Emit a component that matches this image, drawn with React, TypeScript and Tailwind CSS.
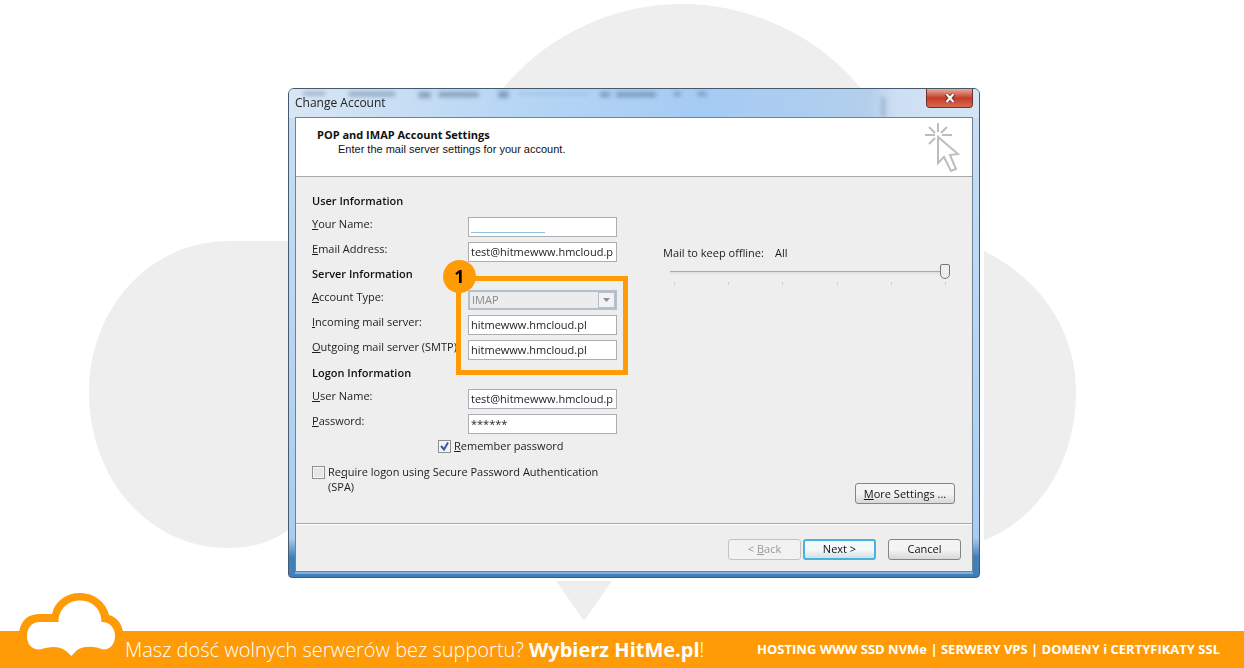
import React from 'react';

interface FieldRowProps {
    id: string;
    hotkey: string;
    label: string;
    children: React.ReactNode;
}

const inputStyles =
    'block h-5 w-full border border-[#abadb3] bg-white px-[2px] pb-[2px] text-[11px] font-medium text-[#1c1c1c] outline-none';

const buttonStyles =
    'h-[21px] rounded-[3px] border border-[#858585] bg-linear-to-b from-[#f4f4f4] from-50% to-[#d8d8d8] leading-[18px] text-[#111]';

const FieldRow: React.FC<FieldRowProps> = ({ id, hotkey, label, children }) => (
    <div className="flex h-[25px] items-end">
        <label htmlFor={id} className="w-[156px] shrink-0 self-start whitespace-nowrap leading-[24px]">
            <u>{hotkey}</u>
            {label}
        </label>
        <div className="relative w-[149px]">{children}</div>
    </div>
);

const SectionTitle: React.FC<{ children: React.ReactNode }> = ({ children }) => (
    <h2 className="h-[23px] font-semibold leading-[24px] text-[#111]">{children}</h2>
);

const BackgroundCloud = () => (
    <svg className="absolute inset-x-0 top-0 w-full" viewBox="0 0 1244 631" fill="#eeeeee" aria-hidden="true">
        <circle cx="682" cy="236" r="232" />
        <path d="M230 241 H500 V530 H288 C270 543 250 548 228 548 C150 548 89 480 89 392 C89 310 148 241 230 241 Z" />
        <path d="M900 230 C1005 236 1076 305 1076 392 C1076 460 1040 518 985 540 L900 530 Z" />
        <path d="M554 578 H614 L584 621 Z" />
    </svg>
);

// Blurred toolbar of the window behind the glass title bar
const GlassBlur = () => (
    <svg className="absolute inset-x-0 top-0 h-[29px] w-full rounded-t-[5px]" viewBox="0 0 692 29" preserveAspectRatio="none" aria-hidden="true">
        <defs>
            <filter id="glass" x="-20%" y="-60%" width="140%" height="220%">
                <feGaussianBlur stdDeviation="2" />
            </filter>
            <linearGradient id="tint">
                <stop offset="0" stopColor="#d9e6f3" />
                <stop offset="0.3" stopColor="#b9d7f5" />
                <stop offset="0.6" stopColor="#a5cbf3" />
                <stop offset="0.84" stopColor="#b3cfec" />
                <stop offset="0.88" stopColor="#cddff2" />
                <stop offset="1" stopColor="#d3e4f5" />
            </linearGradient>
        </defs>
        <rect width="692" height="29" fill="url(#tint)" />
        <g filter="url(#glass)" fill="#5d7896" opacity="0.6">
            <rect x="14" y="3" width="22" height="3" />
            <rect x="60" y="3" width="46" height="4" />
            <rect x="130" y="3" width="12" height="6" />
            <rect x="150" y="3" width="40" height="5" />
            <rect x="210" y="2" width="10" height="7" />
            <rect x="230" y="4" width="70" height="2" opacity="0.4" />
            <rect x="312" y="3" width="10" height="5" />
            <rect x="328" y="3" width="40" height="5" />
            <rect x="386" y="3" width="7" height="4" />
            <rect x="410" y="3" width="9" height="4" />
            <rect x="594" y="8" width="4" height="20" opacity="0.6" />
        </g>
    </svg>
);

const ClickIcon = () => (
    <svg width="36" height="52" viewBox="0 0 36 52" fill="none" stroke="#bdbdbd" strokeWidth="2" aria-hidden="true">
        <path d="M14 2 V11 M1 14 H11 M18 14 H28 M5 6 L11 12 M23 6 L17 12 M5 23 L11 17" />
        <path d="M14 16 V42 L20 36 L27 50 L32 48 L26 34 L34 33 Z" fill="#fff" />
    </svg>
);

const CloudLogo = () => (
    <svg className="absolute bottom-0 left-[19px]" width="105" height="76" viewBox="19 592 105 76" aria-hidden="true">
        <path
            fill="#ff9b06"
            d="M19 632 C21 620 28 614 40 614 H52 C55 601 66 593 80 593 C94 593 106 602 109 615 C117 617 122 624 123 632 Z"
        />
        <path
            fill="#fff"
            d="M40 622 H58.500 C58.500 609 68 600.500 80 600.500 C92 600.500 101.500 609 101.500 622 C110 622 115 628 115 636 C115 644 110 650 103 649.500 C96 646 82 645 76 651 L71.500 656 L66 651 C60 646 50 646 40 649.500 C32 650 27 644 27 636 C27 628 32 622 40 622 Z"
        />
    </svg>
);

const OfflineSlider = () => (
    <div className="w-[292px]">
        <div className="flex gap-[11px] leading-4">
            <label htmlFor="offline">Mail to keep offline:</label>
            <output htmlFor="offline">All</output>
        </div>
        <input
            id="offline"
            type="range"
            min={0}
            max={5}
            defaultValue={5}
            className="ml-[7px] mt-[3px] block h-4 w-[280px] appearance-none bg-transparent [&::-webkit-slider-runnable-track]:h-[3px] [&::-webkit-slider-runnable-track]:border-t [&::-webkit-slider-runnable-track]:border-[#a9a9a9] [&::-webkit-slider-runnable-track]:bg-[#e2e2e2] [&::-webkit-slider-thumb]:-mt-[8px] [&::-webkit-slider-thumb]:h-[15px] [&::-webkit-slider-thumb]:w-[10px] [&::-webkit-slider-thumb]:appearance-none [&::-webkit-slider-thumb]:rounded-t-[2px] [&::-webkit-slider-thumb]:rounded-b-[5px] [&::-webkit-slider-thumb]:border [&::-webkit-slider-thumb]:border-[#777] [&::-webkit-slider-thumb]:bg-[#eee]"
        />
        <div className="ml-[11px] mt-[2px] flex w-[272px] justify-between">
            {[0, 1, 2, 3, 4, 5].map((tick) => (
                <span key={tick} className="h-[3px] w-px bg-[#cccccc]" />
            ))}
        </div>
    </div>
);

const AccountForm = () => (
    <div className="flex flex-1 justify-between border-t border-[#a8a8a8] bg-[#eeeeee] pl-[16px] pr-[17px] pt-[12px]">
        <div className="w-[306px] shrink-0">
            <section>
                <SectionTitle>User Information</SectionTitle>
                <FieldRow id="name" hotkey="Y" label="our Name:">
                    <input id="name" className={inputStyles} />
                    <span className="absolute bottom-[4px] left-[3px] h-px w-[74px] bg-[#8fc3e3]" />
                </FieldRow>
                <FieldRow id="email" hotkey="E" label="mail Address:">
                    <input id="email" className={inputStyles} defaultValue="test@hitmewww.hmcloud.p" />
                </FieldRow>
            </section>

            <section className="relative">
                <SectionTitle>Server Information</SectionTitle>
                <FieldRow id="type" hotkey="A" label="ccount Type:">
                    <select
                        id="type"
                        disabled
                        className="block h-5 w-full appearance-none border-2 border-[#b5bfcc] bg-[#ececec] px-[2px] leading-4 text-[#8a8a8a] opacity-100"
                    >
                        <option>IMAP</option>
                    </select>
                    <span className="pointer-events-none absolute right-[2px] top-[2px] flex h-4 w-[17px] items-center justify-center border border-[#b5bfcc] bg-[#f3f3f3]">
                        <svg width="7" height="4" viewBox="0 0 7 4" fill="#8f8f8f" aria-hidden="true">
                            <path d="M0 0 H7 L3.500 4 Z" />
                        </svg>
                    </span>
                </FieldRow>
                <FieldRow id="incoming" hotkey="I" label="ncoming mail server:">
                    <input id="incoming" className={inputStyles} defaultValue="hitmewww.hmcloud.pl" />
                </FieldRow>
                <FieldRow id="outgoing" hotkey="O" label="utgoing mail server (SMTP)">
                    <input id="outgoing" className={inputStyles} defaultValue="hitmewww.hmcloud.pl" />
                </FieldRow>
                <div className="pointer-events-none absolute left-[144px] top-[14px] h-[99px] w-[172px] border-[5px] border-[#ff9b06]">
                    <span className="absolute -left-[18px] -top-[21px] flex size-[33px] items-center justify-center rounded-full bg-[#ff9b06] text-[18px] font-bold text-black">
                        1
                    </span>
                </div>
            </section>

            <section className="pt-px">
                <SectionTitle>Logon Information</SectionTitle>
                <FieldRow id="user" hotkey="U" label="ser Name:">
                    <input id="user" className={inputStyles} defaultValue="test@hitmewww.hmcloud.p" />
                </FieldRow>
                <FieldRow id="password" hotkey="P" label="assword:">
                    <input id="password" className={inputStyles} defaultValue="******" />
                </FieldRow>
            </section>

            <label className="flex h-[25px] items-center gap-[3px] pl-[126px]">
                <span className="relative flex size-[13px]">
                    <input type="checkbox" defaultChecked className="size-[13px] appearance-none border border-[#8e8f8f] bg-[#f2f4f8]" />
                    <svg className="pointer-events-none absolute inset-0" width="13" height="13" viewBox="0 0 13 13" fill="none" stroke="#3d56a6" strokeWidth="2" aria-hidden="true">
                        <path d="M3 6 L6 9.500 L10 2.500" />
                    </svg>
                </span>
                <span>
                    <u>R</u>emember password
                </span>
            </label>
            <label className="mt-[5px] flex gap-[3px] leading-[15px]">
                <input type="checkbox" className="mt-[2px] size-[13px] shrink-0 appearance-none border border-[#8e8f8f] bg-[#e6e6e6] shadow-[inset_0_0_0_1px_#f6f6f6]" />
                <span>
                    Re<u>q</u>uire logon using Secure Password Authentication (SPA)
                </span>
            </label>
        </div>

        <div className="flex flex-col items-end justify-between pb-[19px] pt-[56px]">
            <OfflineSlider />
            <button type="button" className={`${buttonStyles} w-[100px]`}>
                <u>M</u>ore Settings ...
            </button>
        </div>
    </div>
);

const AccountDialog = () => (
    <div
        role="dialog"
        aria-labelledby="dialog-title"
        className="relative flex min-h-[490px] w-full max-w-[692px] flex-col rounded-t-[6px] rounded-b-[4px] border border-[#46586b] bg-linear-to-b from-[#c9dff5] via-[#a9cdf0] via-92% to-[#3f7fba] to-96% px-[6px] pb-[5px] text-[11px] font-medium text-[#1c1c1c] shadow-[3px_2px_0_1px_#ffffff]"
    >
        <GlassBlur />
        <div className="relative flex h-[28px] items-start justify-between">
            <h1 id="dialog-title" className="text-[12px] font-normal leading-[28px] text-[#222]">
                Change Account
            </h1>
            <button
                type="button"
                aria-label="Close"
                className="flex h-[19px] w-[47px] items-center justify-center rounded-b-[4px] border border-t-0 border-[#73302a] bg-linear-to-b from-[#e3a99c] via-[#c53b25] via-50% to-[#d9694f]"
            >
                <svg width="12" height="10" viewBox="0 0 12 10" fill="none" aria-hidden="true">
                    <path d="M2 1 L10 9 M10 1 L2 9" stroke="#6d3a3a" strokeWidth="4" />
                    <path d="M2.500 1 L9.500 9 M9.500 1 L2.500 9" stroke="#fff" strokeWidth="2" />
                </svg>
            </button>
        </div>

        <div className="relative flex flex-1 flex-col border border-[#6f8296] bg-[#eeeeee] shadow-[0_2px_0_#7fb0de]">
            <header className="flex h-[58px] justify-between bg-white pl-[21px] pr-[12px]">
                <div className="pt-[9px] leading-[15px] text-[#111]">
                    <p className="font-bold">POP and IMAP Account Settings</p>
                    <p className="pl-[21px] font-['Liberation_Sans',sans-serif]">Enter the mail server settings for your account.</p>
                </div>
                <div className="pt-[3px]">
                    <ClickIcon />
                </div>
            </header>
            <AccountForm />
            <footer className="flex h-[48px] items-center justify-end border-t border-[#a8a8a8] pr-[11px] pt-[3px] shadow-[inset_0_1px_0_#ffffff]">
                <button type="button" disabled className="h-[21px] w-[73px] rounded-[3px] border border-[#c3c3c3] bg-[#f2f2f2] leading-[18px] text-[#999]">
                    &lt; <u>B</u>ack
                </button>
                <button type="button" className="ml-[2px] h-[21px] w-[73px] rounded-[3px] border-2 border-[#45b4dc] bg-linear-to-b from-[#f4f8fa] from-50% to-[#d5dfe4] leading-4 text-[#111]">
                    Next &gt;
                </button>
                <button type="button" className={`${buttonStyles} ml-[12px] w-[73px]`}>
                    Cancel
                </button>
            </footer>
        </div>
    </div>
);

export default function App() {
    return (
        <div className="flex min-h-screen flex-col bg-white font-['Open_Sans',sans-serif]">
            <main className="relative flex flex-1 items-start justify-center overflow-hidden pb-[53px] pl-6 pt-[88px]">
                <BackgroundCloud />
                <AccountDialog />
            </main>
            <footer className="relative flex h-[37px] items-center justify-between whitespace-nowrap bg-[#ff9b06] pl-[125px] pr-6 text-white">
                <CloudLogo />
                <p className="text-[20px] font-light">
                    Masz dość wolnych serwerów bez supportu? <strong className="font-bold">Wybierz HitMe.pl</strong>!
                </p>
                <p className="text-[13px] font-bold">HOSTING WWW SSD NVMe | SERWERY VPS | DOMENY i CERTYFIKATY SSL</p>
            </footer>
        </div>
    );
}
